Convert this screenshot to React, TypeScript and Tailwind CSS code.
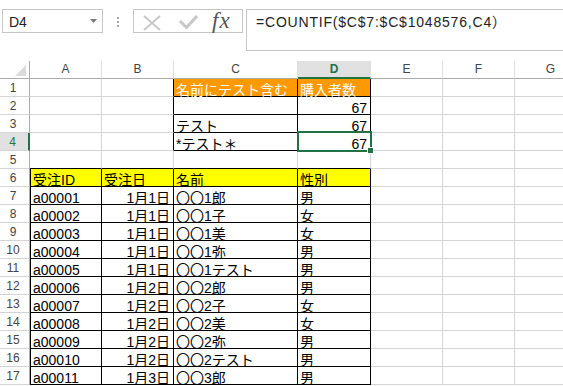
import React from 'react';

type C = { t: string; r?: boolean; f?: 'o' | 'y' };

const letters = ['A', 'B', 'C', 'D', 'E', 'F', 'G'];

const orders = [
  ['a00001', '1月1日', '〇〇1郎', '男'],
  ['a00002', '1月1日', '〇〇1子', '女'],
  ['a00003', '1月1日', '〇〇1美', '女'],
  ['a00004', '1月1日', '〇〇1弥', '男'],
  ['a00005', '1月1日', '〇〇1テスト', '男'],
  ['a00006', '1月2日', '〇〇2郎', '男'],
  ['a00007', '1月2日', '〇〇2子', '女'],
  ['a00008', '1月2日', '〇〇2美', '女'],
  ['a00009', '1月2日', '〇〇2弥', '男'],
  ['a00010', '1月2日', '〇〇2テスト', '男'],
  ['a00011', '1月3日', '〇〇3郎', '男'],
];

const data: Record<number, Record<number, C>> = {
  1: { 2: { t: '名前にテスト含む', f: 'o' }, 3: { t: '購入者数', f: 'o' } },
  2: { 3: { t: '67', r: true } },
  3: { 2: { t: 'テスト' }, 3: { t: '67', r: true } },
  4: { 2: { t: '*テスト＊' }, 3: { t: '67', r: true } },
  6: {
    0: { t: '受注ID', f: 'y' },
    1: { t: '受注日', f: 'y' },
    2: { t: '名前', f: 'y' },
    3: { t: '性別', f: 'y' },
  },
};
orders.forEach((o, i) => {
  data[7 + i] = { 0: { t: o[0] }, 1: { t: o[1], r: true }, 2: { t: o[2] }, 3: { t: o[3] } };
});

function TopBar() {
  return (
    <div className="h-[61px] flex items-start pt-[9px]">
      <div className="ml-[2px] w-[101px] h-[24px] border border-[#c6c6c6] flex items-start justify-between">
        <span className="pl-[6px] pt-[4px] text-[14px] leading-[16px] text-[#222]">D4</span>
        <svg width="7" height="4" className="mt-[9px] mr-[5px]">
          <path d="M0 0H7L3.5 4Z" fill="#7a7a7a" />
        </svg>
      </div>
      <div className="ml-[14px] mt-[8px] flex flex-col gap-[2px]">
        <div className="w-[2px] h-[2px] bg-[#a8a8a8]" />
        <div className="w-[2px] h-[2px] bg-[#a8a8a8]" />
        <div className="w-[2px] h-[2px] bg-[#a8a8a8]" />
      </div>
      <div className="ml-[14px] w-[110px] h-[24px] border border-[#c6c6c6] flex items-start">
        <svg width="18" height="16" className="ml-[9px] mt-[5px]">
          <path d="M1 1L17 15M17 1L1 15" stroke="#c8c8c8" strokeWidth="2" />
        </svg>
        <svg width="19" height="14" className="ml-[18px] mt-[5px]">
          <path d="M1 6L7.5 12.5L18 1" stroke="#c8c8c8" strokeWidth="3" fill="none" />
        </svg>
        <span className="ml-[14px] font-['Liberation_Serif',serif] italic text-[23px] leading-[21px] tracking-[1px] text-[#555]">
          fx
        </span>
      </div>
      <div className="ml-[3px] flex-1 h-[42px] border border-r-0 border-[#c6c6c6] pl-[9px] pt-[4px] text-[14px] leading-[16px] tracking-[0.8px] text-[#222] whitespace-nowrap">
        =COUNTIF($C$7:$C$1048576,C4）
      </div>
    </div>
  );
}

function Sheet() {
  const rows = Array.from({ length: 17 }, (_, i) => i + 1);
  return (
    <div className="relative grid grid-cols-[30px_72px_72px_124px_73px_72px_72px_72px] auto-rows-[18px]">
      <div className="border-r border-b border-r-[#ababab] border-b-[#ababab] flex items-end justify-end">
        <svg width="11" height="11" className="mr-[3px] mb-[2px]">
          <path d="M11 0V11H0Z" fill="#dadada" />
        </svg>
      </div>
      {letters.map((l) => (
        <div
          key={l}
          className={`text-center text-[12px] leading-[15px] pt-[1px] border-r border-r-[#dfdfdf] ${
            l === 'D'
              ? 'bg-[#e1e1e1] border-b-2 border-b-[#217346] text-[#217346] font-bold'
              : 'border-b border-b-[#ababab] text-[#444]'
          }`}
        >
          {l}
        </div>
      ))}
      {rows.map((r) => (
        <React.Fragment key={r}>
          <div
            className={`text-center pr-[3px] pt-[2px] text-[12px] leading-[15px] border-b border-b-[#d4d4d4] ${
              r === 4
                ? 'bg-[#e1e1e1] border-r-2 border-r-[#217346] text-[#217346]'
                : 'border-r border-r-[#ababab] text-[#444]'
            }`}
          >
            {r}
          </div>
          {letters.map((_, c) => {
            const cell = data[r]?.[c];
            const rb = (r <= 4 && c >= 1 && c <= 3) || (r >= 6 && c <= 3);
            const bb = (r <= 4 && (c === 2 || c === 3)) || (r >= 5 && c <= 3);
            const lb = r >= 6 && c === 0;
            return (
              <div
                key={c}
                className={`border-r border-b whitespace-nowrap pt-[5px] text-[14px] leading-[12px] ${
                  rb ? 'border-r-black' : 'border-r-[#d4d4d4]'
                } ${bb ? 'border-b-black' : 'border-b-[#d4d4d4]'} ${
                  lb ? 'shadow-[inset_1px_0_0_#000] pl-[3px]' : ''
                } ${cell?.r ? 'text-right pr-[3px]' : 'pl-[2px]'} ${
                  cell?.f === 'o' ? 'bg-[#ff9900] text-white' : cell?.f === 'y' ? 'bg-[#ffff00]' : ''
                }`}
              >
                {cell?.t}
              </div>
            );
          })}
        </React.Fragment>
      ))}
      <div className="absolute left-[297px] top-[70px] w-[75px] h-[21px] border-2 border-[#217346]" />
      <div className="absolute left-[367px] top-[86px] w-[7px] h-[7px] bg-[#217346] border border-white" />
    </div>
  );
}

export default function App() {
  return (
    <div className="w-[563px] h-[386px] overflow-hidden bg-white text-black font-['Liberation_Sans','Noto_Sans_CJK_JP',sans-serif]">
      <TopBar />
      <Sheet />
    </div>
  );
}
